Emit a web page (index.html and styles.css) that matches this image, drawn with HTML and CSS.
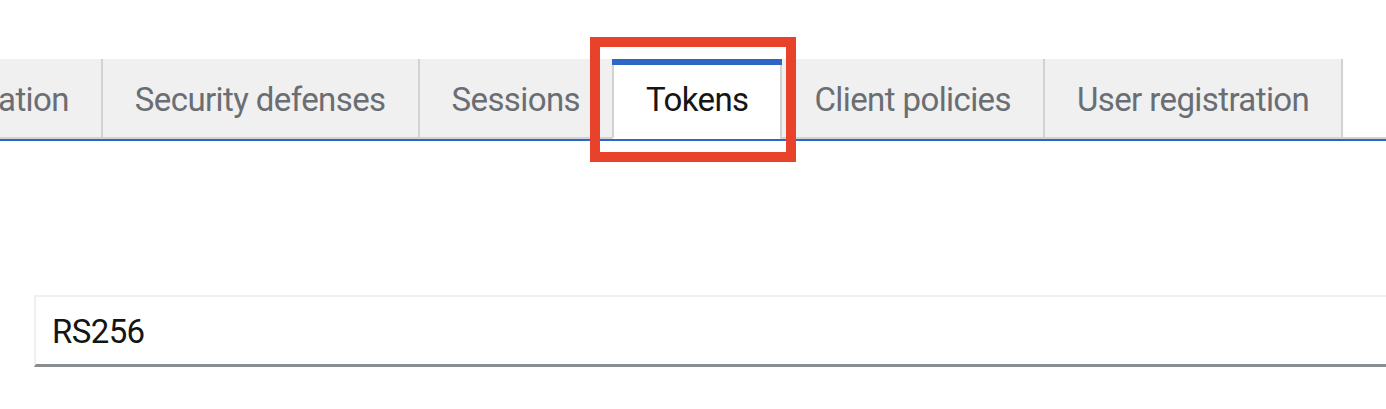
FILE: index.html
```html
<!DOCTYPE html>
<html lang="en">
<head>
<meta charset="utf-8">
<title>Realm settings – Tokens</title>
<link rel="stylesheet" href="styles.css">
</head>
<body>
<div class="page">
  <nav class="tabs-wrap">
    <ul class="tabs">
      <li class="tab">Localization</li>
      <li class="tab">Security defenses</li>
      <li class="tab">Sessions</li>
      <li class="tab tab-active">Tokens</li>
      <li class="tab">Client policies</li>
      <li class="tab tab-last">User registration</li>
      <li class="tabs-fill"></li>
    </ul>
    <div class="highlight"></div>
  </nav>
  <section class="content">
    <div class="select-toggle">RS256</div>
  </section>
</div>
</body>
</html>
```
FILE: styles.css
```css
html, body {
  margin: 0;
  padding: 0;
  background: #ffffff;
  overflow: hidden;
}

body {
  font-family: Roboto, "Noto Sans", "Liberation Sans", sans-serif;
  font-size: 33px;
  letter-spacing: -0.6px;
  color: #151515;
}

.page {
  width: 1386px;
  height: 409px;
  overflow: hidden;
}

.tabs-wrap {
  position: relative;
  padding-top: 59px;
  border-bottom: 2px solid #2e66c6;
}

.tabs {
  display: flex;
  list-style: none;
  margin: 0 0 0 -136px;
  padding: 0;
}

.tab {
  padding: 17px 32px 13px 32px;
  line-height: 48px;
  white-space: nowrap;
  color: #6a6e73;
  background: #f0f0f0;
  border-left: 2px solid #d2d2d2;
  border-bottom: 2px solid #d2d2d2;
}

.tab-last {
  border-right: 2px solid #d2d2d2;
}

.tab-active {
  position: relative;
  color: #151515;
  background: #ffffff;
  border-bottom-color: #ffffff;
}

.tab-active::before {
  content: "";
  position: absolute;
  top: 0;
  left: -2px;
  right: -2px;
  height: 6px;
  background: #2e66c6;
  z-index: 1;
}

.tabs-fill {
  flex: 1 0 200px;
  border-bottom: 2px solid #d2d2d2;
}

.highlight {
  position: absolute;
  left: 590px;
  top: 37px;
  width: 186px;
  height: 105px;
  border: 10px solid #e8422a;
  z-index: 2;
}

.content {
  padding: 154px 0 0 34px;
}

.select-toggle {
  width: 1500px;
  padding: 11px 16px 8px 16px;
  line-height: 48px;
  border-style: solid;
  border-width: 2px 2px 3px 2px;
  border-color: #f0f0f0 #f0f0f0 #8a8d90 #f0f0f0;
  color: #151515;
}
```
